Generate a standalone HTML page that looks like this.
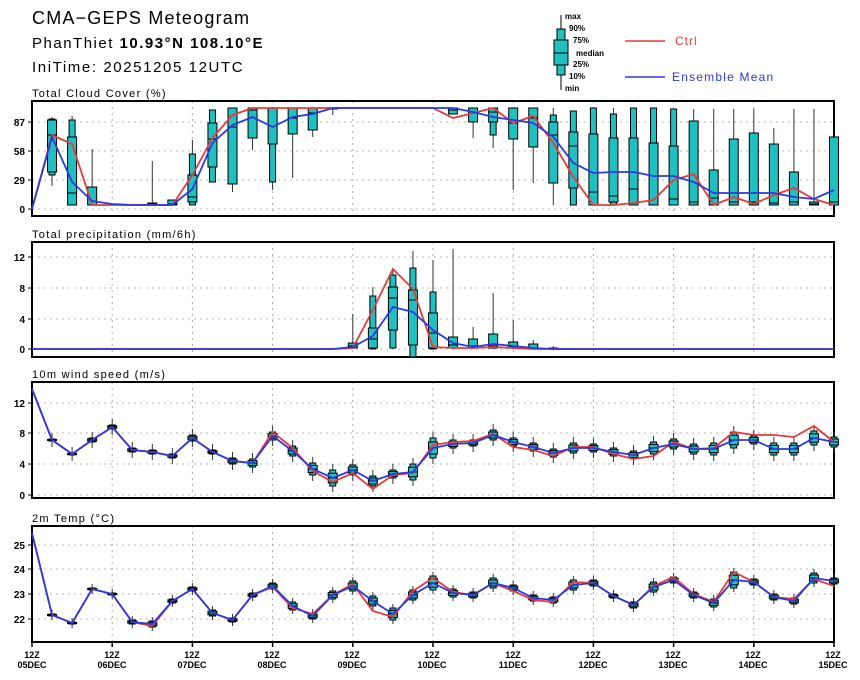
<!DOCTYPE html>
<html><head><meta charset="utf-8"><style>
body{margin:0;background:#fff;width:860px;height:680px;overflow:hidden}
svg{display:block}
text{font-family:"Liberation Sans",sans-serif}
.t{font-size:11px;fill:#000;letter-spacing:1.3px}
.tk{font-size:10px;font-weight:bold;fill:#000}
.ax{font-size:9px;font-weight:bold;fill:#000}
.lg{font-size:8px;font-weight:bold;fill:#000}
</style></head><body>
<svg id="s" width="860" height="680" xmlns="http://www.w3.org/2000/svg">
<text x="32" y="24" style="font-size:18px;letter-spacing:1.2px">CMA−GEPS Meteogram</text>
<text x="32" y="48" style="font-size:15px;letter-spacing:1.5px">PhanThiet <tspan style="font-weight:bold">10.93°N 108.10°E</tspan></text>
<text x="32" y="72" style="font-size:15px;letter-spacing:1.6px">IniTime: 20251205 12UTC</text>
<text x="32" y="97" class="t">Total Cloud Cover (%)</text>
<text x="32" y="238" class="t">Total precipitation (mm/6h)</text>
<text x="32" y="378" class="t">10m wind speed (m/s)</text>
<text x="32" y="522" class="t">2m Temp (°C)</text>
<g class="tk" text-anchor="end">
<text x="25" y="126">87</text><text x="25" y="155">58</text><text x="25" y="184">29</text><text x="25" y="213">0</text>
<text x="25" y="261">12</text><text x="25" y="292">8</text><text x="25" y="323">4</text><text x="25" y="353">0</text>
<text x="25" y="407">12</text><text x="25" y="437">8</text><text x="25" y="468">4</text><text x="25" y="499">0</text>
<text x="25" y="549">25</text><text x="25" y="573">24</text><text x="25" y="598">23</text><text x="25" y="623">22</text>
</g>
<g class="ax" text-anchor="middle">
<text x="32" y="658">12Z</text><text x="32" y="668">05DEC</text>
<text x="112" y="658">12Z</text><text x="112" y="668">06DEC</text>
<text x="192" y="658">12Z</text><text x="192" y="668">07DEC</text>
<text x="272" y="658">12Z</text><text x="272" y="668">08DEC</text>
<text x="352" y="658">12Z</text><text x="352" y="668">09DEC</text>
<text x="432" y="658">12Z</text><text x="432" y="668">10DEC</text>
<text x="513" y="658">12Z</text><text x="513" y="668">11DEC</text>
<text x="593" y="658">12Z</text><text x="593" y="668">12DEC</text>
<text x="673" y="658">12Z</text><text x="673" y="668">13DEC</text>
<text x="753" y="658">12Z</text><text x="753" y="668">14DEC</text>
<text x="833" y="658">12Z</text><text x="833" y="668">15DEC</text>
</g>
<line x1="561" y1="15" x2="561" y2="90" stroke="#000"/>
<rect x="557" y="29" width="8" height="46" fill="#20c0c0" stroke="#000"/>
<rect x="554" y="40" width="14" height="25" fill="#20c0c0" stroke="#000"/>
<line x1="554" y1="53" x2="568" y2="53" stroke="#000"/>
<text class="lg" x="565" y="19">max</text><text class="lg" x="569" y="31">90%</text>
<text class="lg" x="573" y="43">75%</text><text class="lg" x="576" y="56">median</text>
<text class="lg" x="573" y="67">25%</text><text class="lg" x="569" y="79">10%</text>
<text class="lg" x="565" y="91">min</text>
<line x1="625" y1="41" x2="665" y2="41" stroke="#e83a3a" stroke-width="1.5"/>
<text x="675" y="45" style="font-size:12px;fill:#e83a3a;letter-spacing:1px">Ctrl</text>
<line x1="625" y1="77" x2="665" y2="77" stroke="#2a3ae0" stroke-width="1.5"/>
<text x="672" y="81" style="font-size:12px;fill:#2a3ae0;letter-spacing:1.2px">Ensemble Mean</text>
<g id="g"></g>
</svg>
<script>
var g=document.getElementById('g'),NS='http://www.w3.org/2000/svg';
function el(n,a){var e=document.createElementNS(NS,n);for(var k in a)e.setAttribute(k,a[k]);g.appendChild(e);return e;}
var X0=32,X1=834,ST=(X1-X0)/40;function X(i){return X0+ST*i;}
var panels=[[101,216,[122,151,180,209]],[242,357,[257,288,319,349]],[382,498,[403,433,464,495]],[526,642,[545,569,594,619]]];
panels.forEach(function(p){
 for(var d=1;d<10;d++){var x=X(4*d);el('line',{x1:x,y1:p[0],x2:x,y2:p[1],stroke:'#aaa','stroke-dasharray':'2,4'});}
 p[2].forEach(function(y){el('line',{x1:X0,y1:y,x2:X1,y2:y,stroke:'#bbb','stroke-dasharray':'2,4'});el('line',{x1:X0-4,y1:y,x2:X0,y2:y,stroke:'#000'});});
 el('rect',{x:X0,y:p[0],width:X1-X0,height:p[1]-p[0],fill:'none',stroke:'#000','stroke-width':2});
});
for(var d=0;d<11;d++){var x=X(4*d);el('line',{x1:x,y1:642,x2:x,y2:647,stroke:'#000','stroke-width':1.5});}
function box(i,b){var x=X(i);
 el('line',{x1:x,y1:b[0],x2:x,y2:b[6],stroke:'#333'});
 el('rect',{x:x-3,y:b[1],width:6,height:Math.max(1,b[5]-b[1]),fill:'#20c0c0',stroke:'#000'});
 el('rect',{x:x-4.5,y:b[2],width:9,height:Math.max(1,b[4]-b[2]),fill:'#20c0c0',stroke:'#000'});
 el('line',{x1:x-4.5,y1:b[3],x2:x+4.5,y2:b[3],stroke:'#000'});}
function line(a,c){el('polyline',{points:a.map(function(y,i){return X(i)+','+y;}).join(' '),fill:'none',stroke:c,'stroke-width':1.8});}
var cb={1:[117,119,120,135,172,175,186],2:[116,120,137,193,205,205,205],3:[149,187,187,205,205,205,205],6:[161,203,203,204,205,205,205],7:[200,200,200,204,205,205,205],
8:[140,154,175,197,202,205,205],9:[110,110,123,139,167,182,182],10:[108,108,108,127,184,184,192],11:[108,108,108,110,138,138,150],12:[108,108,108,144,144,182,190],
13:[108,108,108,118,134,134,178],14:[108,108,108,113,130,130,137],15:[108,108,108,108,108,108,115],21:[108,108,108,110,114,114,114],22:[108,108,108,112,122,122,138],
23:[108,108,108,112,122,135,148],24:[108,108,108,123,139,139,190],25:[108,108,108,118,147,147,183],26:[108,115,122,135,183,183,205],27:[111,111,132,146,188,205,205],
28:[108,108,134,192,205,205,205],29:[108,114,138,196,202,205,205],30:[108,108,138,189,205,205,205],31:[108,108,143,205,205,205,205],32:[109,109,146,199,205,205,205],
33:[109,121,121,202,205,205,205],34:[109,170,170,198,205,205,205],35:[109,139,139,202,205,205,205],36:[109,133,133,202,205,205,205],37:[128,144,144,203,205,205,205],
38:[109,172,172,202,205,205,205],39:[109,202,202,204,205,205,205],40:[137,137,137,202,205,205,205]};
for(var k in cb)box(+k,cb[k]);
var cc=[209,135,144,205,205,205,205,205,175,138,115,108,108,108,108,108,108,108,108,108,108,118,113,108,123,116,143,177,205,205,203,200,180,174,205,197,204,195,188,199,205];
var cm=[209,137,182,201,204,205,205,205,189,143,125,117,127,117,114,108,108,108,108,108,108,108,112,117,120,123,137,163,173,172,172,176,176,182,193,193,193,193,197,199,190];
line(cc,'#e83a3a');line(cm,'#2a3ae0');
var pb={16:[314,343,343,346,348,348,349],17:[287,296,328,339,348,349,349],18:[269,275,287,298,330,348,349],19:[251,268,290,300,345,357,357],20:[260,292,313,333,348,349,349],
21:[249,337,337,345,348,348,349],22:[327,339,339,346,348,348,349],23:[293,334,334,346,348,348,349],24:[320,342,342,347,348,348,349],25:[340,344,344,348,349,349,349],26:[346,348,348,349,349,349,349]};
for(var k in pb)box(+k,pb[k]);
var pc=[],pm=[];for(var i=0;i<=40;i++){pc.push(349);pm.push(349);}
pc[16]=348;pc[17]=310;pc[18]=269;pc[19]=289;pc[20]=347;pc[21]=348;pc[22]=348;pc[23]=347;pc[24]=348;
pm[16]=347;pm[17]=336;pm[18]=307;pm[19]=312;pm[20]=330;pm[21]=343;pm[22]=347;pm[23]=344;pm[24]=346;pm[25]=348;
line(pc,'#e83a3a');line(pm,'#2a3ae0');
var wc=[389,440,454,440,427,450,452,456,438,452,461,463,432,448,471,482,473,489,475,473,445,442,441,434,447,450,456,447,447,454,459,456,442,449,448,432,435,435,437,426,442];
var wm=[389,440,454,440,427,450,452,456,438,452,461,463,436,451,469,478,470,481,474,472,448,444,443,435,442,447,453,448,448,452,455,448,444,449,449,440,440,449,449,438,442];
var ws=[0,1,1,2,2,2,2,2,3,2,3,4,4,5,6,8,5,5,4,8,10,4,3,5,4,4,4,5,4,4,4,6,5,5,6,8,4,6,6,7,5];
for(var i=1;i<=40;i++){var m=wm[i],s=ws[i];box(i,[m-s-6,m-s,m-s*0.6,m,m+s*0.6,m+s,m+s+6]);}
line(wc,'#e83a3a');line(wm,'#2a3ae0');
var tc=[533,615,623,589,594,622,626,601,589,613,620,595,587,608,614,595,584,611,617,591,578,592,595,583,591,600,602,582,583,596,605,586,577,594,602,572,582,597,599,579,586];
var tm=[533,615,623,589,594,622,624,601,589,613,620,595,586,606,616,595,586,601,614,595,583,593,595,583,588,598,600,585,583,596,605,587,580,595,603,580,582,597,601,578,581];
var ts=[0,1,1,1,1,2,3,2,2,3,2,2,3,4,3,4,5,5,6,5,7,4,3,5,3,3,3,5,3,2,3,5,3,3,4,8,3,3,3,5,3];
for(var i=1;i<=40;i++){var m=tm[i],s=ts[i];box(i,[m-s-4,m-s,m-s*0.6,m,m+s*0.6,m+s,m+s+4]);}
line(tc,'#e83a3a');line(tm,'#2a3ae0');
</script>
</body></html>
